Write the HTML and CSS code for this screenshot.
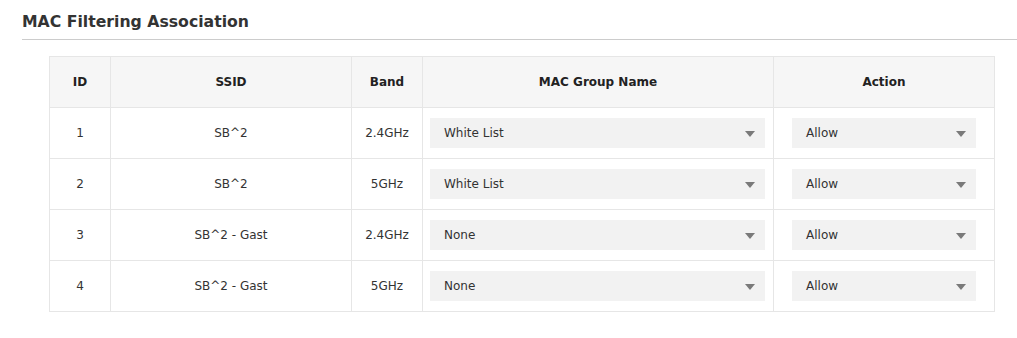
FILE: index.html
```html
<!DOCTYPE html>
<html lang="en">
<head>
  <meta charset="UTF-8">
  <title>MAC Filtering Association</title>
  <link rel="stylesheet" href="styles.css">
</head>
<body>
<div class="panel">
  <h2 class="panel-title">MAC Filtering Association</h2>
  <table class="assoc-table">
    <thead>
      <tr>
        <th class="col-id">ID</th>
        <th class="col-ssid">SSID</th>
        <th class="col-band">Band</th>
        <th class="col-group">MAC Group Name</th>
        <th class="col-action">Action</th>
      </tr>
    </thead>
    <tbody>
      <tr>
        <td>1</td>
        <td>SB^2</td>
        <td>2.4GHz</td>
        <td class="cell-group"><div class="dropdown"><span>White List</span><i class="caret"></i></div></td>
        <td class="cell-action"><div class="dropdown small"><span>Allow</span><i class="caret"></i></div></td>
      </tr>
      <tr>
        <td>2</td>
        <td>SB^2</td>
        <td>5GHz</td>
        <td class="cell-group"><div class="dropdown"><span>White List</span><i class="caret"></i></div></td>
        <td class="cell-action"><div class="dropdown small"><span>Allow</span><i class="caret"></i></div></td>
      </tr>
      <tr>
        <td>3</td>
        <td>SB^2 - Gast</td>
        <td>2.4GHz</td>
        <td class="cell-group"><div class="dropdown"><span>None</span><i class="caret"></i></div></td>
        <td class="cell-action"><div class="dropdown small"><span>Allow</span><i class="caret"></i></div></td>
      </tr>
      <tr>
        <td>4</td>
        <td>SB^2 - Gast</td>
        <td>5GHz</td>
        <td class="cell-group"><div class="dropdown"><span>None</span><i class="caret"></i></div></td>
        <td class="cell-action"><div class="dropdown small"><span>Allow</span><i class="caret"></i></div></td>
      </tr>
    </tbody>
  </table>
</div>
</body>
</html>
```

FILE: styles.css
```css
body {
  margin: 0;
  background-color: #fff;
  font-family: "DejaVu Sans", Verdana, sans-serif;
  color: #333;
}
.panel {
  padding: 12px 0 0 22px;
}
.panel-title {
  margin: 0;
  font-size: 15.7px;
  font-weight: bold;
  color: #333;
  padding-bottom: 8px;
  border-bottom: 1px solid #cccccc;
}
.assoc-table {
  margin: 16px 0 0 27px;
  border-collapse: collapse;
  width: 946px;
  table-layout: fixed;
  font-size: 12px;
}
.assoc-table th,
.assoc-table td {
  border: 1px solid #e6e6e6;
  height: 50px;
  padding: 0;
  text-align: center;
  vertical-align: middle;
}
.assoc-table th {
  background-color: #f6f6f6;
  font-weight: bold;
  color: #222;
}
.col-id { width: 60px; }
.col-ssid { width: 240px; }
.col-band { width: 70px; }
.col-group { width: 350px; }
.col-action { width: 220px; }
.cell-group {
  padding: 0 8px 0 7px !important;
}
.cell-action {
  padding: 0 18px !important;
}
.dropdown {
  position: relative;
  height: 30px;
  line-height: 30px;
  background-color: #f2f2f2;
  text-align: left;
  padding-left: 14px;
}
.dropdown.small {
  width: 170px;
}
.caret {
  position: absolute;
  right: 10px;
  top: 13px;
  width: 0;
  height: 0;
  border-left: 5px solid transparent;
  border-right: 5px solid transparent;
  border-top: 6px solid #7a7a7a;
}
```
